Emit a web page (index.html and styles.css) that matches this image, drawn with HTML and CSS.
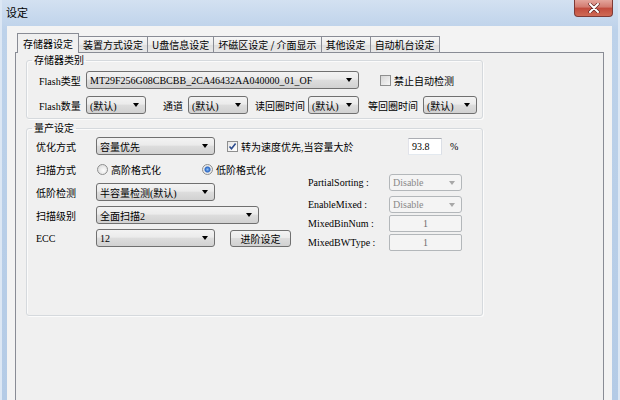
FILE: index.html
```html
<!DOCTYPE html>
<html lang="zh-CN">
<head>
    <meta charset="UTF-8">
    <meta name="viewport" content="width=device-width, initial-scale=1.0">
    <title>设定</title>
    <link rel="stylesheet" href="styles.css">
</head>
<body>

    <div class="window">
        <div class="titlebar">
            <span class="title">设定</span>
            <div class="close">
                <svg width="12" height="10" viewBox="0 0 12 10">
                    <path d="M2 1 L10 9 M10 1 L2 9" stroke="#5a2020" stroke-width="3.2" stroke-linecap="round"/>
                    <path d="M2 1 L10 9 M10 1 L2 9" stroke="#ffffff" stroke-width="2" stroke-linecap="round"/>
                </svg>
            </div>
        </div>

        <div class="client">
            <div class="tabs">
                <div class="tab active">存储器设定</div>
                <div class="tab">装置方式设定</div>
                <div class="tab">U盘信息设定</div>
                <div class="tab">坏磁区设定 / 介面显示</div>
                <div class="tab">其他设定</div>
                <div class="tab">自动机台设定</div>
            </div>

            <div class="page">
                <fieldset class="group flash-group">
                    <legend>存储器类别</legend>
                    <div class="group-body flash-body">
                        <div class="row">
                            <span class="lbl lbl-flash">Flash类型</span>
                            <div class="combo combo-type"><span class="val">MT29F256G08CBCBB_2CA46432AA040000_01_OF</span><span class="arrow"></span></div>
                            <label class="chk-wrap chk-auto"><span class="check"></span>禁止自动检测</label>
                        </div>
                        <div class="row">
                            <span class="lbl lbl-flash">Flash数量</span>
                            <div class="combo combo-cnt"><span class="val">(默认)</span><span class="arrow"></span></div>
                            <span class="lbl lbl-chan">通道</span>
                            <div class="combo combo-chan"><span class="val">(默认)</span><span class="arrow"></span></div>
                            <span class="lbl lbl-read">读回圈时间</span>
                            <div class="combo combo-read"><span class="val">(默认)</span><span class="arrow"></span></div>
                            <span class="lbl lbl-wait">等回圈时间</span>
                            <div class="combo combo-wait"><span class="val">(默认)</span><span class="arrow"></span></div>
                        </div>
                    </div>
                </fieldset>

                <fieldset class="group prod-group">
                    <legend>量产设定</legend>
                    <div class="group-body prod-body">
                        <div class="row">
                            <span class="lbl lbl-prod">优化方式</span>
                            <div class="combo combo-mid"><span class="val">容量优先</span><span class="arrow"></span></div>
                            <label class="chk-wrap chk-speed"><span class="check checked">
                                <svg width="9" height="9" viewBox="0 0 9 9"><path d="M1.5 4.5 L3.5 6.8 L7.6 1.6" fill="none" stroke="#2d4d8f" stroke-width="1.6"/></svg>
                            </span>转为速度优先,当容量大於</label>
                            <div class="num">93.8</div>
                            <span class="pct">%</span>
                        </div>

                        <div class="split">
                            <div class="left-col">
                                <div class="row">
                                    <span class="lbl lbl-prod">扫描方式</span>
                                    <label class="radio-wrap radio-high"><span class="radio"></span>高阶格式化</label>
                                    <label class="radio-wrap"><span class="radio checked"></span>低阶格式化</label>
                                </div>
                                <div class="row">
                                    <span class="lbl lbl-prod">低阶检测</span>
                                    <div class="combo combo-mid"><span class="val">半容量检测(默认)</span><span class="arrow"></span></div>
                                </div>
                                <div class="row">
                                    <span class="lbl lbl-prod">扫描级别</span>
                                    <div class="combo combo-wide"><span class="val">全面扫描2</span><span class="arrow"></span></div>
                                </div>
                                <div class="row">
                                    <span class="lbl lbl-prod">ECC</span>
                                    <div class="combo combo-mid"><span class="val">12</span><span class="arrow"></span></div>
                                    <div class="btn">进阶设定</div>
                                </div>
                            </div>

                            <div class="right-col">
                                <div class="rrow">
                                    <span class="rlbl">PartialSorting :</span>
                                    <div class="combo disabled combo-dis"><span class="val">Disable</span><span class="arrow"></span></div>
                                </div>
                                <div class="rrow rrow-second">
                                    <span class="rlbl">EnableMixed :</span>
                                    <div class="combo disabled combo-dis"><span class="val">Disable</span><span class="arrow"></span></div>
                                </div>
                                <div class="rrow">
                                    <span class="rlbl">MixedBinNum :</span>
                                    <div class="field">1</div>
                                </div>
                                <div class="rrow">
                                    <span class="rlbl">MixedBWType :</span>
                                    <div class="field">1</div>
                                </div>
                            </div>
                        </div>
                    </div>
                </fieldset>
            </div>
        </div>
    </div>

</body>
</html>
```

FILE: styles.css
```css
body {
    margin: 0;
    width: 620px;
    height: 400px;
    overflow: hidden;
    font-family: "Liberation Serif", "Noto Sans CJK SC", serif;
    font-size: 10px;
    color: #000;
}
.window {
    height: 400px;
    display: flex;
    flex-direction: column;
    background: linear-gradient(to bottom, #d3e1f1, #bdd2ea 30px, #b4cbe6);
    box-shadow: inset 2px 0 0 #dce7f4, inset -2px 0 0 #dce7f4;
}
.titlebar {
    height: 26px;
    display: flex;
    align-items: center;
    padding-left: 6px;
}
.title {
    font-family: "Noto Sans CJK SC", sans-serif;
    font-size: 11px;
    margin-bottom: 2px;
}
.close {
    margin-left: auto;
    margin-right: 7px;
    align-self: flex-start;
    width: 39px;
    height: 17px;
    box-sizing: border-box;
    border: 1px solid #7e3a36;
    border-top: none;
    border-radius: 0 0 4px 4px;
    background: linear-gradient(to bottom, #e4a59c, #d27a6f 45%, #c14b3d 50%, #cf6a55);
    display: flex;
    justify-content: center;
    align-items: center;
}
.client {
    flex: 1;
    display: flex;
    flex-direction: column;
    margin: 0 8px 0 7px;
    padding: 7px 8px 0 8px;
    background: #f3f3f3;
}

/* tabs */
.tabs {
    display: flex;
    align-items: flex-end;
    height: 20px;
    padding-left: 2px;
    margin-bottom: -1px;
}
.tab {
    height: 16px;
    box-sizing: border-box;
    margin-bottom: 1px;
    margin-right: -1px;
    padding: 0 4px;
    border: 1px solid #898c95;
    border-bottom: none;
    background: linear-gradient(to bottom, #f7f7f7, #ebebeb 50%, #dedede 51%, #e8e8e8);
    font-family: "Noto Sans CJK SC", sans-serif;
    line-height: 15px;
    white-space: nowrap;
}
.tab.active {
    position: relative;
    z-index: 1;
    height: 20px;
    margin-bottom: 0;
    padding: 0 5px;
    background: #f0f0f0;
    line-height: 19px;
}
.page {
    flex: 1;
    border: 1px solid #898c95;
    border-bottom: none;
    background: #f0f0f0;
    padding-left: 10px;
}

/* group boxes */
.group {
    width: 457px;
    box-sizing: border-box;
    margin: 0;
    padding: 0;
    border: 1px solid #d5d9dd;
    border-radius: 3px;
    box-shadow: inset 1px 1px 0 #fbfbfb, 1px 1px 0 #fbfbfb;
}
.group legend {
    margin-left: 5px;
    padding: 0 2px;
    line-height: 14px;
    font-family: "Noto Sans CJK SC", sans-serif;
}
.prod-group {
    margin-top: 2px;
}
.flash-body {
    padding: 4px 0 4px 12px;
    display: flex;
    flex-direction: column;
    gap: 7px;
}
.prod-body {
    height: 180px;
    box-sizing: border-box;
    padding: 2px 0 0 9px;
}
.row {
    display: flex;
    align-items: center;
    height: 18px;
    white-space: nowrap;
}
.lbl-flash {
    width: 47px;
}
.lbl-chan {
    margin-left: 17px;
    width: 25px;
}
.lbl-read {
    margin-left: 7px;
    width: 53px;
}
.lbl-wait {
    margin-left: 9px;
    width: 55px;
}
.lbl-prod {
    width: 60px;
}

/* combo boxes */
.combo {
    display: flex;
    align-items: center;
    height: 18px;
    box-sizing: border-box;
    padding-left: 3px;
    border: 1px solid #707070;
    border-radius: 3px;
    background: linear-gradient(to bottom, #f3f3f3, #ebebeb 45%, #dddddd 50%, #d1d1d1);
}
.combo .val {
    flex: 1;
    overflow: hidden;
    white-space: nowrap;
}
.combo .arrow {
    width: 0;
    height: 0;
    margin-right: 6px;
    border-left: 3.5px solid transparent;
    border-right: 3.5px solid transparent;
    border-top: 4px solid #000;
}
.combo-type { width: 273px; }
.combo-cnt { width: 60px; }
.combo-chan { width: 60px; }
.combo-read { width: 51px; }
.combo-wait { width: 54px; }
.combo-mid { width: 119px; }
.combo-wide { width: 163px; }
.combo-dis { width: 73px; height: 17px; }
.combo.disabled {
    border-color: #b3b7ba;
    background: #f4f4f4;
    color: #8a8a8a;
}
.combo.disabled .arrow {
    border-top-color: #a8a8a8;
}

/* checks and radios */
.chk-wrap, .radio-wrap {
    display: flex;
    align-items: center;
    font-family: "Liberation Serif", "Noto Sans CJK SC", serif;
}
.check {
    width: 9px;
    height: 9px;
    margin-right: 3px;
    border: 1px solid #8e8f8f;
    background: linear-gradient(135deg, #d6d6d6, #f6f6f6);
    display: flex;
    align-items: center;
    justify-content: center;
}
.check.checked {
    background: linear-gradient(135deg, #e6e6e6, #ffffff);
}
.chk-auto {
    margin-left: 21px;
}
.chk-speed {
    margin-left: 12px;
    width: 181px;
}
.radio {
    width: 9px;
    height: 9px;
    margin-right: 3px;
    border: 1px solid #8e8f8f;
    border-radius: 50%;
    background: radial-gradient(circle at 60% 60%, #fdfdfd, #d4d4d4);
}
.radio.checked {
    background: radial-gradient(circle, #8fc0f4 0, #2a66c4 2.5px, #e8e8e8 3.5px, #f6f6f6);
}
.radio-high {
    margin-left: 1px;
    width: 105px;
}
.num {
    width: 34px;
    height: 17px;
    box-sizing: border-box;
    padding-left: 3px;
    border: 1px solid #abadb3;
    border-color: #abadb3 #dbdfe6 #e3e9ef #e2e3ea;
    background: #fff;
    line-height: 15px;
}
.pct {
    margin-left: 8px;
}
.btn {
    width: 61px;
    height: 17px;
    box-sizing: border-box;
    margin-left: 15px;
    border: 1px solid #707070;
    border-radius: 3px;
    background: linear-gradient(to bottom, #f3f3f3, #ebebeb 45%, #dddddd 50%, #d1d1d1);
    text-align: center;
    line-height: 15px;
    font-family: "Noto Sans CJK SC", sans-serif;
}

/* split area */
.split {
    display: flex;
    margin-top: 5px;
}
.left-col {
    width: 272px;
    display: flex;
    flex-direction: column;
    gap: 5px;
}
.right-col {
    margin-top: 14px;
    display: flex;
    flex-direction: column;
    gap: 2px;
}
.rrow {
    display: flex;
    align-items: center;
    height: 17px;
    white-space: nowrap;
}
.rrow-second {
    margin-top: 3px;
}
.rlbl {
    width: 81px;
}
.field {
    width: 73px;
    height: 17px;
    box-sizing: border-box;
    border: 1px solid #b3b7ba;
    border-radius: 2px;
    background: #f4f4f4;
    color: #6d6d6d;
    text-align: center;
    line-height: 15px;
}
```
